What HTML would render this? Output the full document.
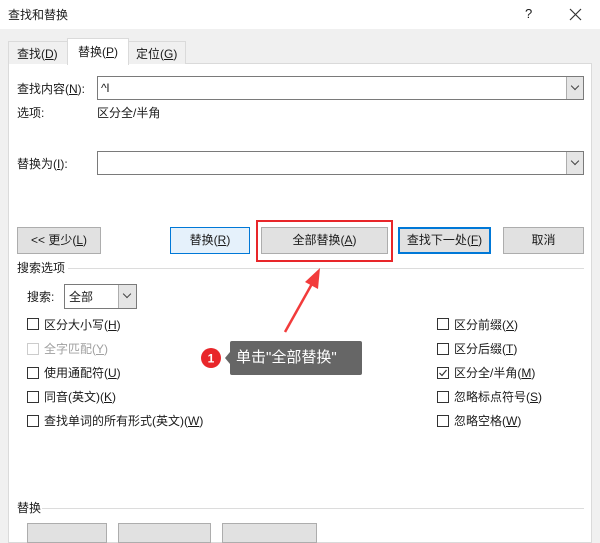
<!DOCTYPE html>
<html><head><meta charset="utf-8"><style>
*{box-sizing:border-box;margin:0;padding:0}
body{width:600px;height:530px;overflow:hidden;background:#f0f0f0;font-family:"Liberation Sans","Noto Sans CJK SC",sans-serif;font-size:12px;color:#1a1a1a;position:relative}
.a{position:absolute}
.t{position:absolute;white-space:nowrap;line-height:14px}
u{text-decoration:underline}
.btn{position:absolute;background:#e1e1e1;border:1px solid #adadad;text-align:center;line-height:24px}
.cb{position:absolute;width:12px;height:12px;border:1px solid #333;background:#fff}
.inp{position:absolute;background:#fff;border:1px solid #7a7a7a}
.dd{position:absolute;top:0;right:0;width:17px;height:100%;background:#e5e5e5;border-left:1px solid #adadad}
.dd:after{content:"";position:absolute;left:5px;top:6px;width:5px;height:5px;border-right:1px solid #444;border-bottom:1px solid #444;transform:rotate(45deg)}
.line{position:absolute;height:1px;background:#dcdcdc}
</style></head><body>
<div class="a" style="left:0;top:0;width:600px;height:29px;background:#fff"></div>
<div class="t" style="left:8px;top:8px;font-size:12px">查找和替换</div>
<div class="t" style="left:525px;top:7px;font-size:13px">?</div>
<svg class="a" style="left:569px;top:8px" width="13" height="13"><path d="M1 1L12 12M12 1L1 12" stroke="#333" stroke-width="1.2"/></svg>

<div class="a" style="left:8px;top:63px;width:584px;height:480px;background:#fff;border:1px solid #dadada"></div>
<div class="a" style="left:8px;top:41px;width:60px;height:23px;border:1px solid #dadada;border-bottom:none;background:#f0f0f0"></div>
<div class="t" style="left:17px;top:47px">查找(<u>D</u>)</div>
<div class="a" style="left:67px;top:38px;width:62px;height:27px;border:1px solid #dadada;border-bottom:none;background:#fff"></div>
<div class="t" style="left:78px;top:45px">替换(<u>P</u>)</div>
<div class="a" style="left:128px;top:41px;width:58px;height:23px;border:1px solid #dadada;border-bottom:none;background:#f0f0f0"></div>
<div class="t" style="left:136px;top:47px">定位(<u>G</u>)</div>

<div class="t" style="left:17px;top:82px">查找内容(<u>N</u>):</div>
<div class="inp" style="left:97px;top:76px;width:487px;height:24px"><span class="t" style="left:3px;top:4px">^l</span><div class="dd"></div></div>
<div class="t" style="left:17px;top:106px">选项:</div>
<div class="t" style="left:97px;top:106px">区分全/半角</div>
<div class="t" style="left:17px;top:157px">替换为(<u>I</u>):</div>
<div class="inp" style="left:97px;top:151px;width:487px;height:24px"><div class="dd"></div></div>

<div class="btn" style="left:17px;top:227px;width:84px;height:27px">&lt;&lt; 更少(<u>L</u>)</div>
<div class="btn" style="left:170px;top:227px;width:80px;height:27px;background:#e5f1fb;border-color:#0078d7">替换(<u>R</u>)</div>
<div class="btn" style="left:261px;top:227px;width:127px;height:27px">全部替换(<u>A</u>)</div>
<div class="a" style="left:256px;top:220px;width:137px;height:42px;border:2px solid #e8262a"></div>
<div class="btn" style="left:398px;top:227px;width:93px;height:27px;border:2px solid #0078d7;line-height:23px">查找下一处(<u>F</u>)</div>
<div class="btn" style="left:503px;top:227px;width:81px;height:27px">取消</div>

<div class="t" style="left:17px;top:261px">搜索选项</div>
<div class="line" style="left:68px;top:268px;width:516px"></div>
<div class="t" style="left:27px;top:290px">搜索:</div>
<div class="inp" style="left:64px;top:284px;width:73px;height:25px"><span class="t" style="left:4px;top:5px">全部</span><div class="dd" style="width:18px"></div></div>

<div class="cb" style="left:27px;top:318px"></div><div class="t" style="left:44px;top:318px">区分大小写(<u>H</u>)</div>
<div class="cb" style="left:27px;top:343px;border-color:#ccc"></div><div class="t" style="left:44px;top:342px;color:#a0a0a0">全字匹配(<u>Y</u>)</div>
<div class="cb" style="left:27px;top:367px"></div><div class="t" style="left:44px;top:366px">使用通配符(<u>U</u>)</div>
<div class="cb" style="left:27px;top:391px"></div><div class="t" style="left:44px;top:390px">同音(英文)(<u>K</u>)</div>
<div class="cb" style="left:27px;top:415px"></div><div class="t" style="left:44px;top:414px">查找单词的所有形式(英文)(<u>W</u>)</div>

<div class="cb" style="left:437px;top:318px"></div><div class="t" style="left:454px;top:318px">区分前缀(<u>X</u>)</div>
<div class="cb" style="left:437px;top:343px"></div><div class="t" style="left:454px;top:342px">区分后缀(<u>T</u>)</div>
<div class="cb" style="left:437px;top:367px"></div><svg class="a" style="left:437px;top:367px" width="12" height="12"><path d="M2.5 6L5 8.5L9.5 3" stroke="#333" fill="none" stroke-width="1.2"/></svg><div class="t" style="left:454px;top:366px">区分全/半角(<u>M</u>)</div>
<div class="cb" style="left:437px;top:391px"></div><div class="t" style="left:454px;top:390px">忽略标点符号(<u>S</u>)</div>
<div class="cb" style="left:437px;top:415px"></div><div class="t" style="left:454px;top:414px">忽略空格(<u>W</u>)</div>

<div class="t" style="left:17px;top:501px">替换</div>
<div class="line" style="left:42px;top:508px;width:542px"></div>
<div class="btn" style="left:27px;top:523px;width:80px;height:20px"></div>
<div class="btn" style="left:118px;top:523px;width:93px;height:20px"></div>
<div class="btn" style="left:222px;top:523px;width:95px;height:20px"></div>

<svg class="a" style="left:0;top:0" width="600" height="530">
<path d="M285 332L313 282" stroke="#f23b3b" stroke-width="2.5"/>
<path d="M320 268L305 282L318 289Z" fill="#f23b3b"/>
<circle cx="211" cy="358" r="10" fill="#e8262a"/>
<text x="211" y="362.5" fill="#fff" font-size="12" font-weight="bold" text-anchor="middle" font-family="Liberation Sans">1</text>
<path d="M230 352L225 358L230 364Z" fill="#666"/>
</svg>
<div class="a" style="left:230px;top:341px;width:132px;height:34px;background:#666;border-radius:2px"></div>
<div class="t" style="left:236px;top:349px;color:#fff;font-size:15px;line-height:18px">单击"全部替换"</div>
</body></html>
